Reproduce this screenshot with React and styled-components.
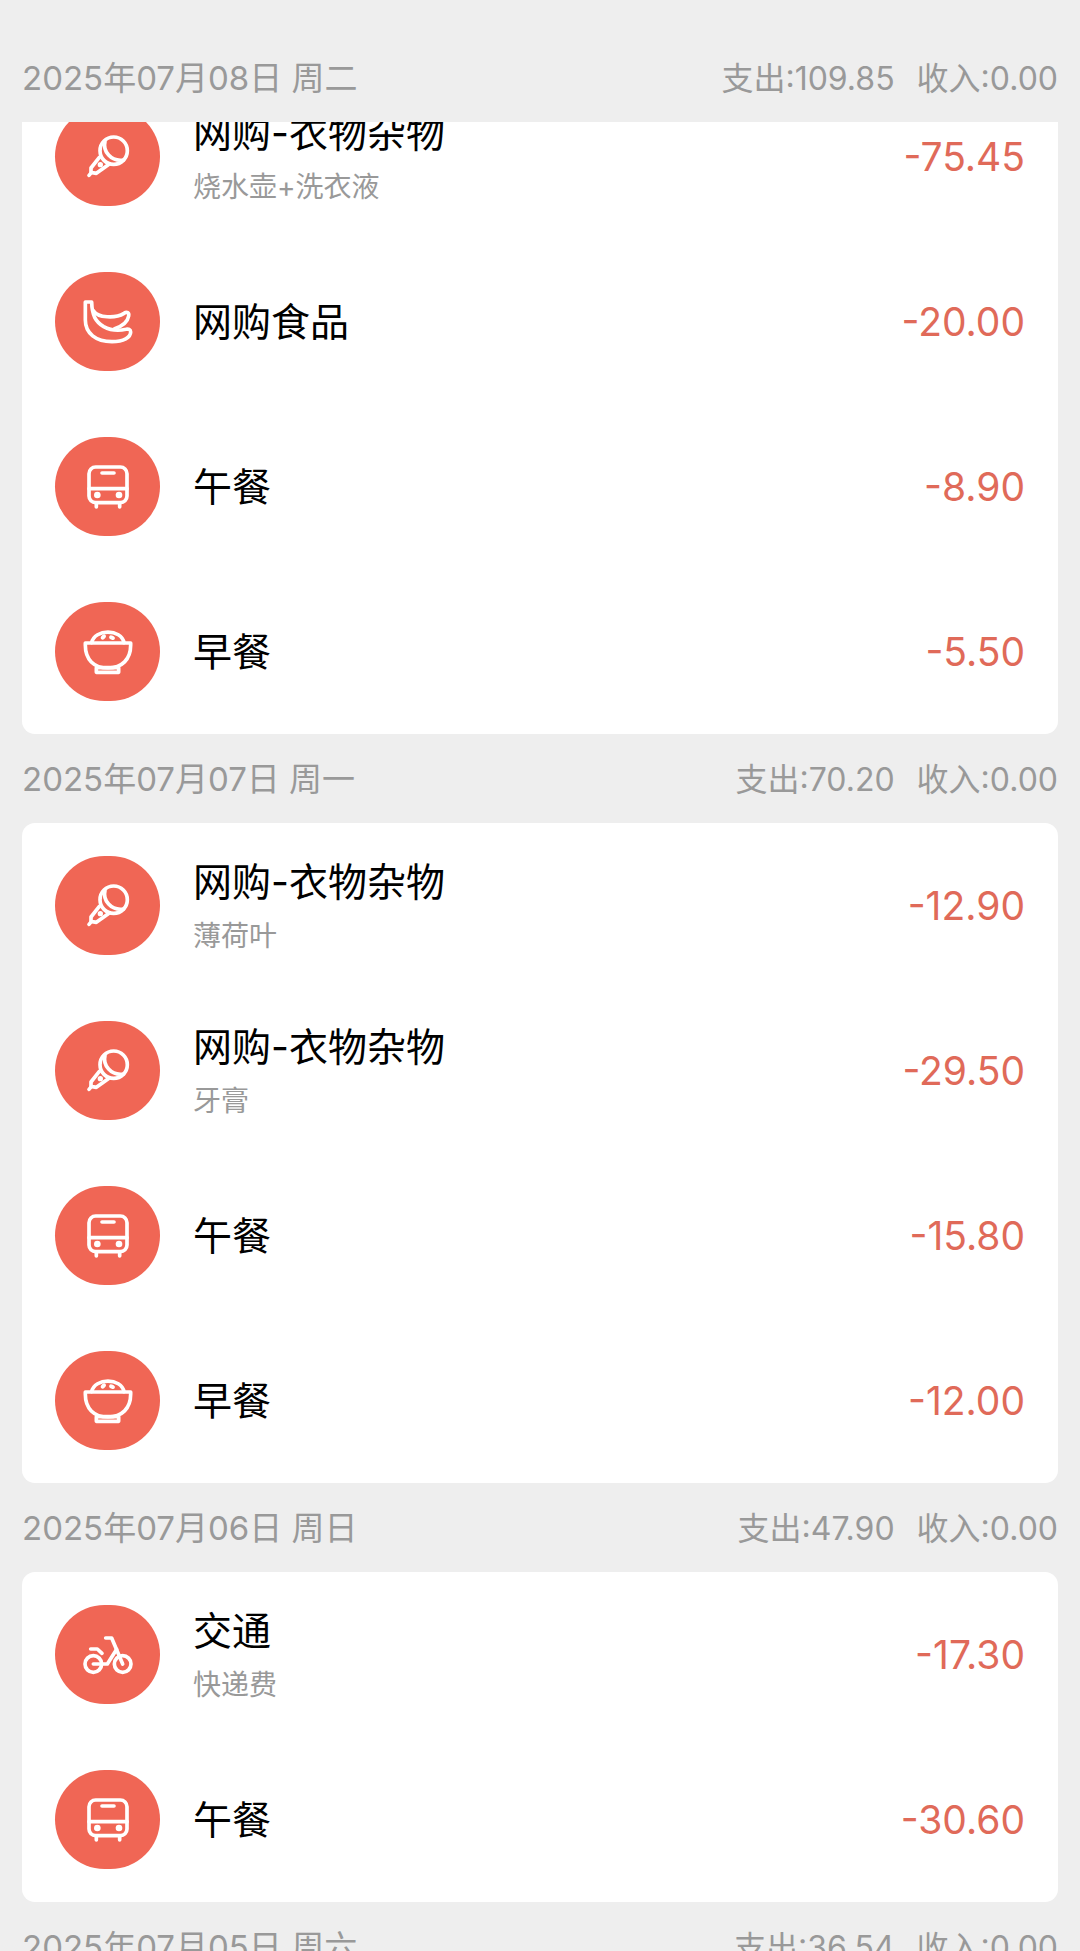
import React from 'react'
import styled, { createGlobalStyle } from 'styled-components'

const GlobalStyle = createGlobalStyle`
  * {
    box-sizing: border-box;
  }
  body {
    margin: 0;
    background-color: #eeeeee;
    font-family: Inter, "Noto Sans CJK SC", sans-serif;
  }
`

const Page = styled.main`
  height: 100vh;
  padding: 33px 22px 0;
  overflow: hidden;
`

const DayHeader = styled.header`
  display: flex;
  align-items: center;
  justify-content: space-between;
  height: 89px;
  padding-bottom: 4px;
  color: #999999;
`

const DayDate = styled.h2`
  margin: 0;
  font-size: 33px;
  font-weight: 400;
`

const Totals = styled.div`
  display: flex;
  gap: 22px;
  font-size: 32px;
`

const Card = styled.div`
  overflow: hidden;
  background-color: white;
  border-radius: ${(props) => (props.$scrolled ? '0 0 13px 13px' : '13px')};
`

const RecordList = styled.ul`
  margin: ${(props) => (props.$scrolled ? '-48px' : '0')} 0 0;
  padding: 0;
  list-style: none;
`

const Record = styled.li`
  display: flex;
  align-items: center;
  gap: 33px;
  height: 165px;
  padding: 0 33px;
`

const IconCircle = styled.div`
  display: flex;
  align-items: center;
  justify-content: center;
  flex-shrink: 0;
  width: 105px;
  height: 99px;
  border-radius: 50px;
  background-color: #f06655;
`

const Icon = styled.svg`
  width: 52px;
  height: 52px;
  fill: none;
  stroke: white;
  stroke-width: 11px;
  stroke-linecap: round;
  stroke-linejoin: round;

  .solid {
    fill: white;
    stroke: none;
  }
`

const RecordText = styled.div`
  flex: 1;
`

const Category = styled.div`
  color: black;
  font-size: 39px;
  line-height: 60px;
`

const Note = styled.div`
  color: #999999;
  font-size: 28px;
  line-height: 48px;
`

const Amount = styled.div`
  color: #e06a59;
  font-size: 39px;
`

const icons = {
  mic: (
    <>
      <circle cx="95" cy="59" r="41" />
      <path d="M69 32 C62 60 86 93 125 87" />
      <path d="M52 79 L27 111 V124 L43 127 L79 101" />
      <path d="M28 125 L21 133" />
      <circle className="solid" cx="55" cy="101" r="8" />
    </>
  ),
  banana: (
    <>
      <path d="M10 18 V72 C10 112 42 137 90 137 C125 137 146 124 146 108 C146 100 139 98 132 100 C110 105 85 103 65 92 C42 78 30 60 29 18 Z" />
      <path d="M34 44 C48 66 100 68 126 52 C135 46 142 50 140 60 C137 78 122 90 98 98" />
    </>
  ),
  bus: (
    <>
      <rect x="21" y="18" width="114" height="107" rx="20" />
      <path d="M21 83 H135 M60 36 H96 M43 130 V138 M113 130 V138" />
      <circle className="solid" cx="46" cy="102" r="10" />
      <circle className="solid" cx="111" cy="102" r="10" />
    </>
  ),
  bowl: (
    <>
      <path d="M10 51 V58 C10 100 35 126 78 126 C120 126 146 100 146 58 V51 Z" />
      <path d="M29 50 C38 8 118 8 126 50" />
      <rect x="43" y="125" width="67" height="14" />
      <ellipse className="solid" cx="64" cy="33" rx="9" ry="6" transform="rotate(-45 64 33)" />
      <ellipse className="solid" cx="90" cy="35" rx="9" ry="6" transform="rotate(25 90 35)" />
    </>
  ),
  bike: (
    <>
      <circle cx="34" cy="105" r="25" />
      <circle cx="122" cy="105" r="25" />
      <path d="M34 105 H76 L104 61" />
      <path d="M71 27 H89 L122 105" />
      <path d="M26 60 H46 L60 73" />
    </>
  ),
}

const days = [
  {
    date: '2025年07月08日 周二',
    expense: '109.85',
    income: '0.00',
    scrolled: true,
    records: [
      { icon: 'mic', category: '网购-衣物杂物', note: '烧水壶+洗衣液', amount: '-75.45' },
      { icon: 'banana', category: '网购食品', amount: '-20.00' },
      { icon: 'bus', category: '午餐', amount: '-8.90' },
      { icon: 'bowl', category: '早餐', amount: '-5.50' },
    ],
  },
  {
    date: '2025年07月07日 周一',
    expense: '70.20',
    income: '0.00',
    records: [
      { icon: 'mic', category: '网购-衣物杂物', note: '薄荷叶', amount: '-12.90' },
      { icon: 'mic', category: '网购-衣物杂物', note: '牙膏', amount: '-29.50' },
      { icon: 'bus', category: '午餐', amount: '-15.80' },
      { icon: 'bowl', category: '早餐', amount: '-12.00' },
    ],
  },
  {
    date: '2025年07月06日 周日',
    expense: '47.90',
    income: '0.00',
    records: [
      { icon: 'bike', category: '交通', note: '快递费', amount: '-17.30' },
      { icon: 'bus', category: '午餐', amount: '-30.60' },
    ],
  },
  {
    date: '2025年07月05日 周六',
    expense: '36.54',
    income: '0.00',
    records: [],
  },
]

function App() {
  return (
    <Page>
      <GlobalStyle />
      {days.map((day) => (
        <section key={day.date}>
          <DayHeader>
            <DayDate>{day.date}</DayDate>
            <Totals>
              <span>支出:{day.expense}</span>
              <span>收入:{day.income}</span>
            </Totals>
          </DayHeader>
          <Card $scrolled={day.scrolled}>
            <RecordList $scrolled={day.scrolled}>
              {day.records.map((record, index) => (
                <Record key={index}>
                  <IconCircle>
                    <Icon viewBox="0 0 156 156" aria-hidden="true">{icons[record.icon]}</Icon>
                  </IconCircle>
                  <RecordText>
                    <Category>{record.category}</Category>
                    {record.note && <Note>{record.note}</Note>}
                  </RecordText>
                  <Amount>{record.amount}</Amount>
                </Record>
              ))}
            </RecordList>
          </Card>
        </section>
      ))}
    </Page>
  )
}

export default App
